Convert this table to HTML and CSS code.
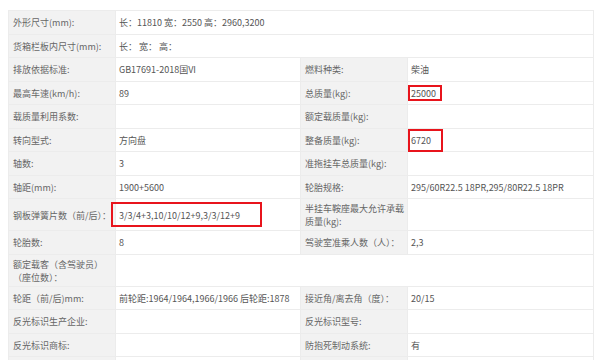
FILE: index.html
```html
<!DOCTYPE html>
<html lang="zh">
<head>
<meta charset="utf-8">
<link rel="stylesheet" href="styles.css">
</head>
<body>
<table class="spec">
  <colgroup><col class="c-l"><col class="c-v"><col class="c-l"><col class="c-v2"></colgroup>
  <tr><td class="lab">外形尺寸(mm):</td><td class="val" colspan="3">长：11810 宽：2550 高：2960,3200</td></tr>
  <tr><td class="lab">货箱栏板内尺寸(mm):</td><td class="val" colspan="3">长： 宽： 高：</td></tr>
  <tr><td class="lab">排放依据标准:</td><td class="val">GB17691-2018国VI</td><td class="lab">燃料种类:</td><td class="val">柴油</td></tr>
  <tr><td class="lab">最高车速(km/h):</td><td class="val">89</td><td class="lab">总质量(kg):</td><td class="val"><span class="txt">25000</span><span class="mark m1"></span></td></tr>
  <tr><td class="lab">载质量利用系数:</td><td class="val"></td><td class="lab">额定载质量(kg):</td><td class="val"></td></tr>
  <tr><td class="lab">转向型式:</td><td class="val">方向盘</td><td class="lab">整备质量(kg):</td><td class="val"><span class="txt">6720</span><span class="mark m2"></span></td></tr>
  <tr><td class="lab">轴数:</td><td class="val">3</td><td class="lab">准拖挂车总质量(kg):</td><td class="val"></td></tr>
  <tr><td class="lab">轴距(mm):</td><td class="val">1900+5600</td><td class="lab">轮胎规格:</td><td class="val">295/60R22.5 18PR,295/80R22.5 18PR</td></tr>
  <tr class="tall"><td class="lab">钢板弹簧片数（前/后）：</td><td class="val"><span class="txt">3/3/4+3,10/10/12+9,3/3/12+9</span><span class="mark m3"></span></td><td class="lab">半挂车鞍座最大允许承载质量(kg):</td><td class="val"></td></tr>
  <tr><td class="lab">轮胎数:</td><td class="val">8</td><td class="lab">驾驶室准乘人数（人）：</td><td class="val">2,3</td></tr>
  <tr class="tall"><td class="lab">额定载客（含驾驶员）（座位数）：</td><td class="val" colspan="3"></td></tr>
  <tr><td class="lab">轮距（前/后)mm:</td><td class="val">前轮距:1964/1964,1966/1966 后轮距:1878</td><td class="lab">接近角/离去角（度）：</td><td class="val">20/15</td></tr>
  <tr><td class="lab">反光标识生产企业:</td><td class="val"></td><td class="lab">反光标识型号:</td><td class="val"></td></tr>
  <tr><td class="lab">反光标识商标:</td><td class="val"></td><td class="lab">防抱死制动系统:</td><td class="val">有</td></tr>
  <tr><td class="lab"></td><td class="val"></td><td class="lab"></td><td class="val"></td></tr>
</table>
</body>
</html>
```
FILE: styles.css
```css
html, body {
  background: #fff;
}
body {
  margin: 10px 0 0 8px;
  height: 350px;
  overflow: hidden;
  font-family: "Noto Sans CJK SC", "Noto Sans", sans-serif;
  font-size: 9px;
  color: #555;
}
.spec {
  width: 585px;
  border-collapse: collapse;
  table-layout: fixed;
}
.c-l { width: 107px; }
.c-v { width: 185px; }
.c-v2 { width: 186px; }
.spec tr { height: 23.5px; }
.spec tr.tall { height: 32px; }
.spec td {
  border: 1px solid #ececec;
  padding: 1px 3px 0 3px;
  line-height: 13px;
  vertical-align: middle;
  position: relative;
  white-space: normal;
}
.spec td.lab {
  background: #f2f2f2;
  color: #666;
  padding-left: 4px;
}
.spec td.val {
  color: #555;
}
.mark {
  position: absolute;
  border: 2px solid #e8141c;
  box-sizing: border-box;
}
.m1 { left: 0; top: 3px; width: 34px; height: 16px; }
.m2 { left: 0; top: 0; width: 35px; height: 23px; }
.m3 { left: -5px; top: 3px; width: 151px; height: 25px; }
```
